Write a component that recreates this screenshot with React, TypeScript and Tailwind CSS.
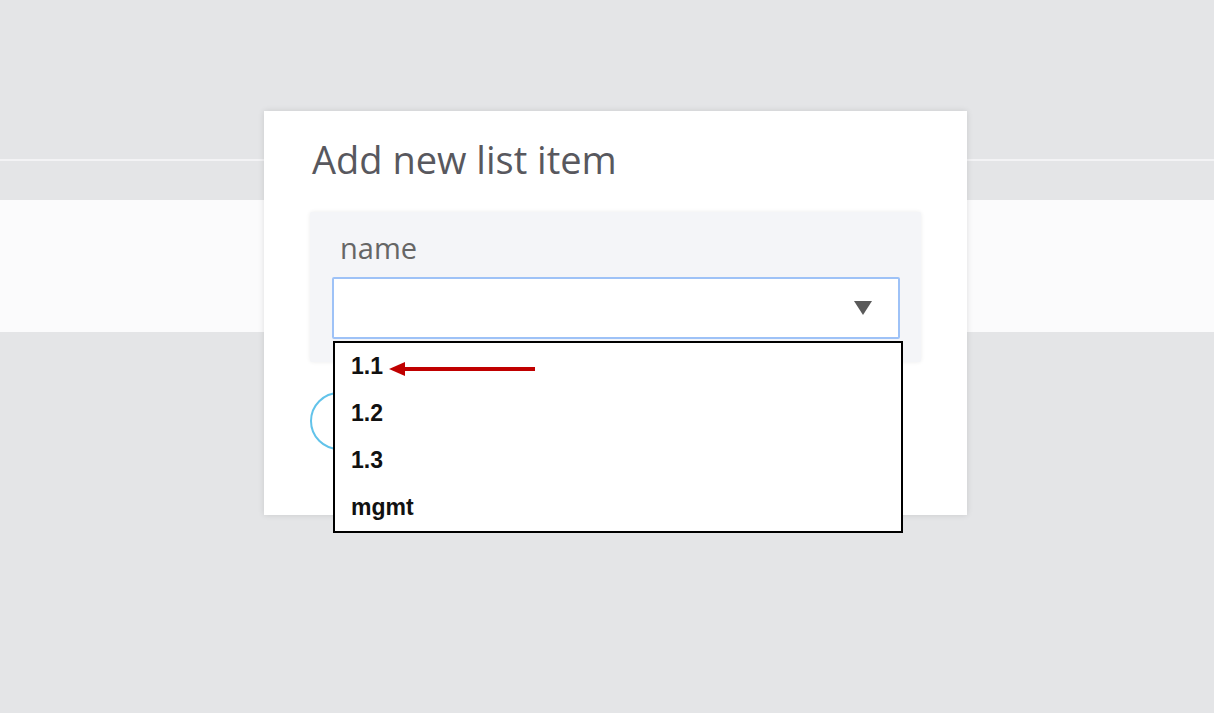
const OPTIONS = ['1.1', '1.2', '1.3', 'mgmt']

function CaretDown() {
  return (
    <svg width="18" height="14" viewBox="0 0 18 14" className="block">
      <path d="M0 0 H18 L9 14 Z" fill="#5a5a5a" />
    </svg>
  )
}

function RedArrow() {
  return (
    <svg width="146" height="16" viewBox="0 0 146 16" className="block">
      <rect x="12" y="6" width="134" height="4" fill="#c00000" />
      <path d="M0 8 L16 1 L16 15 Z" fill="#c00000" />
    </svg>
  )
}

export default function App() {
  return (
    <div className="relative h-[713px] w-full overflow-hidden bg-[#e4e5e7]" style={{ fontFamily: '"Open Sans", "Liberation Sans", sans-serif' }}>
      {/* page behind the modal */}
      <div className="pt-[159px]">
        <div className="h-[2px] bg-[#f3f3f5]" />
        <div className="mt-[39px] h-[132px] bg-[#fbfbfc]" />
      </div>

      {/* modal */}
      <div className="absolute left-[264px] top-[111px] h-[404px] w-[703px] bg-white pl-[46px] pr-[46px] pt-[25px] shadow-[0_0_6px_rgba(0,0,0,0.12)]">
        <h2 className="pl-[2px] text-[38px] font-normal leading-[46px] text-[#58585e]">Add new list item</h2>

        <div className="mt-[30px] w-[611px] rounded-[2px] bg-[#f4f5f8] px-[22px] pb-[23px] pt-[17px] shadow-[0_0_4px_rgba(0,0,0,0.08)]">
          <label className="mb-[10px] block pl-[8px] text-[29px] leading-[38px] text-[#666]">name</label>
          <div className="relative">
            <div className="flex h-[62px] w-[568px] items-center justify-end rounded-[2px] border-2 border-[#9ec2f7] bg-white pr-[26px]">
              <CaretDown />
            </div>

            {/* open dropdown list */}
            <div className="absolute left-[1px] top-[64px] z-10 w-[570px] border-2 border-black bg-white" style={{ fontFamily: '"Liberation Sans", Arial, sans-serif' }}>
              {OPTIONS.map((o, i) => (
                <div key={o} className="relative flex h-[47px] items-center pl-[16px] text-[23px] font-bold text-[#111]">
                  {o}
                  {i === 0 && (
                    <div className="absolute left-[54px] top-[18px]">
                      <RedArrow />
                    </div>
                  )}
                </div>
              ))}
            </div>
          </div>
        </div>

        <button className="mt-[30px] h-[58px] w-[130px] rounded-full border-2 border-[#62c3ea] bg-white" />
      </div>
    </div>
  )
}
